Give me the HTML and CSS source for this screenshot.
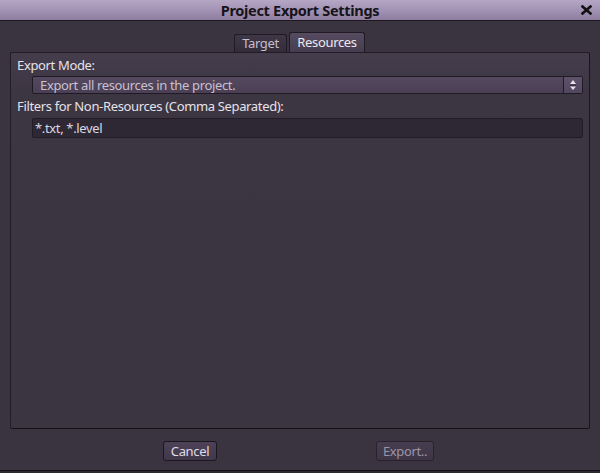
FILE: index.html
```html
<!DOCTYPE html>
<html>
<head>
<meta charset="utf-8">
<link rel="stylesheet" href="styles.css">
</head>
<body>
<div class="dialog">
  <div class="titlebar">
    <span class="title">Project Export Settings</span>
    <span class="close"><svg width="11" height="10" viewBox="0 0 11 10"><path d="M1.5 1.5 L9.5 8.5 M9.5 1.5 L1.5 8.5" stroke="#141116" stroke-width="2.6" stroke-linecap="square"/></svg></span>
  </div>
  <div class="tabs">
    <div class="tab">Target</div>
    <div class="tab active">Resources</div>
  </div>
  <div class="panel">
    <div class="label">Export Mode:</div>
    <div class="select">
      <span class="select-text">Export all resources in the project.</span>
      <span class="spin"><svg width="8" height="12" viewBox="0 0 8 12"><path d="M4 1 L7 5 L1 5 Z" fill="#e6e0ea"/><path d="M1 6.2 L7 6.2" stroke="#2a2430" stroke-width="1"/><path d="M1 7.4 L7 7.4 L4 11 Z" fill="#e6e0ea"/></svg></span>
    </div>
    <div class="label">Filters for Non-Resources (Comma Separated):</div>
    <div class="field">*.txt, *.level</div>
  </div>
  <div class="footer">
    <div class="btn">Cancel</div>
    <div class="btn disabled">Export..</div>
  </div>
</div>
</body>
</html>
```

FILE: styles.css
```css
html, body {
  margin: 0;
  padding: 0;
  background: #2c2830;
}
body {
  width: 600px;
  height: 473px;
  overflow: hidden;
  font-family: "Noto Sans", "Open Sans", sans-serif;
  font-size: 13px;
  letter-spacing: -0.35px;
  color: #e2dde6;
}
.dialog {
  height: 470px;
  background: #3a3340;
  border-bottom: 1px solid #141216;
  display: flex;
  flex-direction: column;
}
.titlebar {
  height: 20px;
  border-bottom: 1px solid #1c1820;
  background: linear-gradient(#b6a7c6, #a090b2 55%, #8e7d9f);
  display: flex;
  align-items: center;
  justify-content: center;
  position: relative;
}
.title {
  font-weight: bold;
  font-size: 14.5px;
  color: #16131a;
  line-height: 20px;
  letter-spacing: -0.3px;
}
.close {
  position: absolute;
  right: 8px;
  top: 5px;
  display: flex;
}
.tabs {
  height: 31px;
  display: flex;
  justify-content: center;
  align-items: flex-end;
  gap: 1px;
}
.tab {
  height: 17px;
  width: 51px;
  border: 1px solid #1f1a24;
  border-bottom: none;
  border-radius: 3px 3px 0 0;
  background: linear-gradient(#3f3747, #332c39);
  color: #c6bfce;
  text-align: center;
  line-height: 17px;
  margin-right: 1px;
}
.tab.active {
  height: 19px;
  width: 74px;
  background: linear-gradient(#564b60, #463d50);
  color: #ece8f0;
  line-height: 18px;
}
.panel {
  margin: 0 10px;
  height: 371px;
  border: 1px solid #211c25;
  border-right-color: #19161c;
  border-bottom-color: #141216;
  border-radius: 2px;
  background: linear-gradient(#453d4c, #3c3542 40px, #3b3441);
  padding: 4px 6px 0 6px;
  display: flex;
  flex-direction: column;
}
.label {
  line-height: 17px;
  height: 17px;
  color: #e6e2ea;
}
.select {
  margin: 2px 0 4px 15px;
  height: 16px;
  border: 1px solid #1f1a24;
  border-radius: 2px;
  background: linear-gradient(#55495f, #4a3f54);
  display: flex;
  align-items: center;
}
.select-text {
  flex: 1;
  padding-left: 7px;
  color: #c9c0d1;
  line-height: 16px;
}
.spin {
  width: 18px;
  height: 16px;
  border-left: 1px solid #1f1a24;
  background: linear-gradient(#5e5269, #524760);
  display: flex;
  align-items: center;
  justify-content: center;
}
.field {
  margin: 3px 0 0 15px;
  height: 18px;
  border: 1px solid #211c26;
  border-radius: 2px;
  background: #2e2834;
  color: #dcd7e0;
  line-height: 18px;
  padding-left: 2px;
}
.footer {
  flex: 1;
  display: flex;
  align-items: flex-start;
  padding-top: 12px;
}
.btn {
  height: 18px;
  border: 1px solid #1b171f;
  border-radius: 3px;
  background: linear-gradient(#4d4258, #41384b);
  color: #e0dae6;
  line-height: 18px;
  text-align: center;
}
.btn:first-child {
  margin-left: 163px;
  width: 52px;
}
.btn.disabled {
  margin-left: 159px;
  width: 56px;
  color: #9d93a7;
  background: linear-gradient(#463d50, #3e3547);
  border-color: #28222d;
}
```
